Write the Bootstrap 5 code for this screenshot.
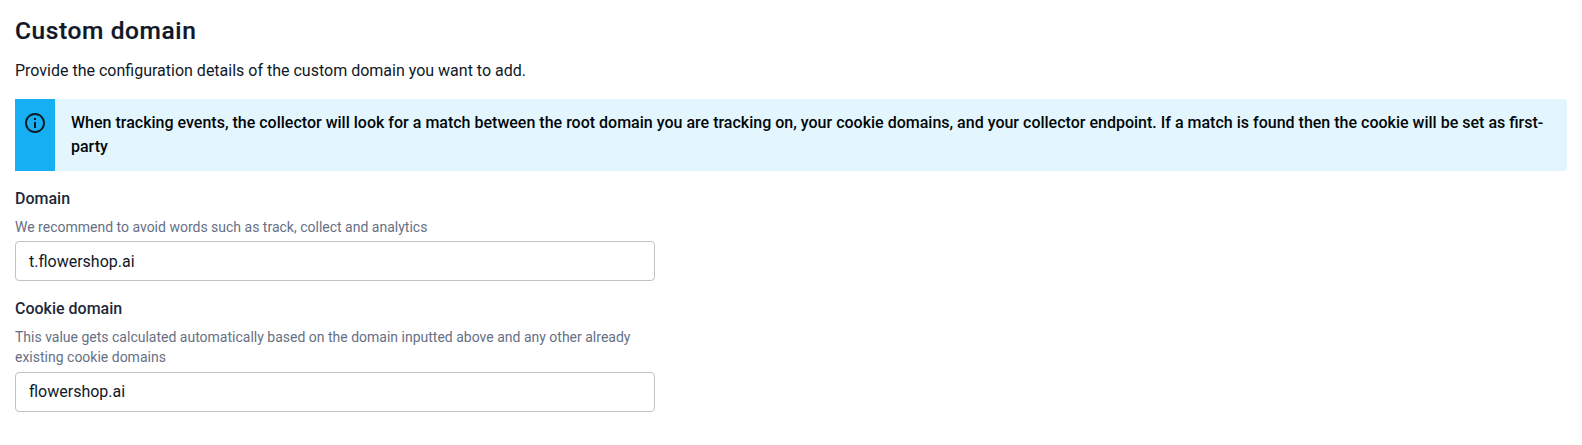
<!DOCTYPE html>
<html lang="en">
<head>
<meta charset="utf-8">
<title>Custom domain</title>
<link href="https://cdn.jsdelivr.net/npm/bootstrap@5.3.0/dist/css/bootstrap.min.css" rel="stylesheet">
<style>
body{font-family:Roboto,sans-serif;color:#101828;font-size:16px;line-height:24px;background:#fff;overflow:hidden}
.page{padding:15px 15px 0}
.title{font-size:24.5px;line-height:32px;font-weight:500;letter-spacing:.6px;-webkit-text-stroke:.2px}
.intro{margin:12px 0 16px}
.info-note{background:#e3f6fe;border-radius:0 4px 4px 0;color:#020608;font-weight:500;height:72px}
.info-side{background:#17aff4;width:40px;padding-top:12px}
.info-text{padding:12px 16px;word-spacing:.03px}
.fields{width:640px}
.field-group{padding-top:16px}
.field-label{font-weight:500;color:#1d2939;line-height:24px}
.hint{font-size:14px;line-height:20.2px;color:#667085;margin:6px 0 4px}
.form-control.entry{height:40px;border:1px solid #c2c2c2;border-radius:4px;padding:0 13px;color:#101828;line-height:24px}
</style>
</head>
<body>
<main class="page">
<h1 class="title mb-0">Custom domain</h1>
<p class="intro">Provide the configuration details of the custom domain you want to add.</p>
<div class="info-note d-flex overflow-hidden" role="note">
<div class="info-side d-flex justify-content-center flex-shrink-0">
<svg width="24" height="24" viewBox="0 0 24 24" fill="#0d1a22"><path d="M11 7h2v2h-2zm0 4h2v6h-2zm1-9C6.48 2 2 6.48 2 12s4.48 10 10 10 10-4.480 10-10S17.520 2 12 2zm0 18c-4.410 0-8-3.590-8-8s3.590-8 8-8 8 3.590 8 8-3.590 8-8 8z"/></svg>
</div>
<div class="info-text">When tracking events, the collector will look for a match between the root domain you are tracking on, your cookie domains, and your collector endpoint. If a match is found then the cookie will be set as first-party</div>
</div>
<form class="fields">
<div class="field-group">
<label class="field-label d-block" for="domain">Domain</label>
<div class="hint">We recommend to avoid words such as track, collect and analytics</div>
<input class="form-control entry" id="domain" value="t.flowershop.ai">
</div>
<div class="field-group">
<label class="field-label d-block" for="cookie">Cookie domain</label>
<div class="hint">This value gets calculated automatically based on the domain inputted above and any other already existing cookie domains</div>
<input class="form-control entry" id="cookie" value="flowershop.ai">
</div>
</form>
</main>
<script src="https://cdn.jsdelivr.net/npm/bootstrap@5.3.0/dist/js/bootstrap.bundle.min.js"></script>
</body>
</html>
